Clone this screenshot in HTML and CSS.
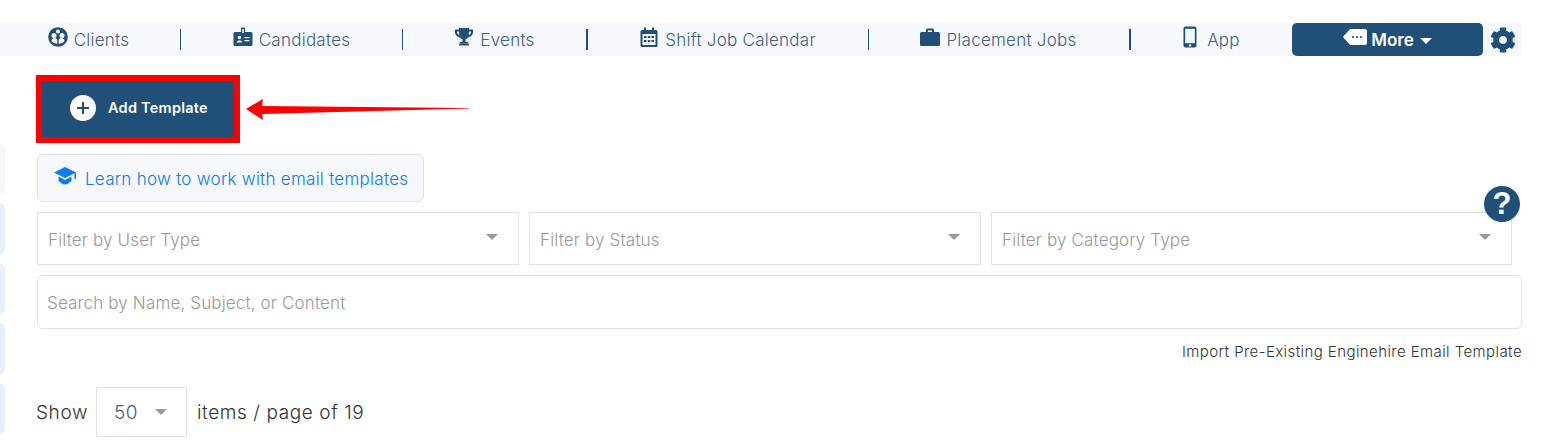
FILE: index.html
```html
<!DOCTYPE html>
<html lang="en">
<head>
  <meta charset="UTF-8">
  <meta name="viewport" content="width=device-width, initial-scale=1.0">
  <title>Email Templates</title>
  <link rel="stylesheet" href="styles.css">
</head>
<body>
  <nav class="nav">
    <a class="nav-item w-clients">
      <svg class="nav-icon" viewBox="0 0 20 20"><circle cx="10" cy="10" r="9.8" fill="#204f78"/><circle cx="10" cy="4.600" r="2" fill="#f6f8fb"/><circle cx="6" cy="8.500" r="2.500" fill="#f6f8fb"/><circle cx="14" cy="8.500" r="2.500" fill="#f6f8fb"/><path d="M3.500 14c0-4 5.500-4 5.800-.8V16.800C6.500 16.800 4.500 15.500 3.500 14zM10.700 13.200c.3-3.200 5.800-3.200 5.800.8-1 1.500-3 2.800-5.800 2.800z" fill="#f6f8fb"/></svg>
      Clients
    </a>
    <span class="nav-sep"></span>
    <a class="nav-item w-candidates">
      <svg class="nav-icon" viewBox="0 0 20 20"><path d="M2 5h6V1.500a1 1 0 0 1 1-1h2a1 1 0 0 1 1 1V5h6a1.500 1.500 0 0 1 1.500 1.500v11A1.500 1.500 0 0 1 18 19H2a1.500 1.500 0 0 1-1.500-1.500v-11A1.500 1.500 0 0 1 2 5z" fill="#204f78"/><rect x="9.200" y="2" width="1.600" height="4" fill="#f6f8fb"/><circle cx="6.500" cy="10.500" r="1.700" fill="#f6f8fb"/><path d="M3.800 15.500c.5-2.600 4.900-2.600 5.400 0zM11.500 10h5v1.200h-5zM11.500 13h5v1.200h-5z" fill="#f6f8fb"/></svg>
      Candidates
    </a>
    <span class="nav-sep"></span>
    <a class="nav-item w-events">
      <svg class="nav-icon" viewBox="0 0 20 20"><path d="M5 1h10v1.500h4v2.500c0 3-2.500 5-5 5.500-.7 1-1.500 1.500-2.500 1.800V15h2.500v1.500H6V15h2.500v-2.700c-1-.3-1.800-.8-2.500-1.800-2.500-.5-5-2.500-5-5.500V2.500h4zM3 4.500V5c0 1.300 1 2.500 2.400 3.100C5.200 7 5 5.800 5 4.500zm14 0h-2c0 1.300-.2 2.500-.4 3.600C16 7.500 17 6.300 17 5z" fill="#204f78"/><rect x="5" y="16.500" width="10" height="2" rx=".5" fill="#204f78"/></svg>
      Events
    </a>
    <span class="nav-sep thick"></span>
    <a class="nav-item w-shift">
      <svg class="nav-icon" viewBox="0 0 20 20"><path d="M5 .5h2V3h6V.5h2V3h2a1.500 1.500 0 0 1 1.500 1.500v14A1.500 1.500 0 0 1 17 20H3a1.500 1.500 0 0 1-1.500-1.500v-14A1.500 1.500 0 0 1 3 3h2z" fill="#204f78"/><rect x="3.500" y="7" width="13" height="11" fill="#f6f8fb"/><path d="M5 9h2.500v2H5zM8.800 9h2.500v2H8.800zM12.500 9H15v2h-2.500zM5 13h2.500v2H5zM8.800 13h2.500v2H8.800zM12.500 13H15v2h-2.500z" fill="#204f78"/></svg>
      Shift Job Calendar
    </a>
    <span class="nav-sep"></span>
    <a class="nav-item w-placement">
      <svg class="nav-icon wide" viewBox="0 0 20 18"><path d="M6 4V2a1.500 1.500 0 0 1 1.500-1.500h5A1.500 1.500 0 0 1 14 2v2h4.500A1.500 1.500 0 0 1 20 5.500v11a1.500 1.500 0 0 1-1.500 1.500h-17A1.500 1.500 0 0 1 0 16.500v-11A1.500 1.500 0 0 1 1.500 4zm2-1.500V4h4V2.500z" fill="#204f78"/></svg>
      Placement Jobs
    </a>
    <span class="nav-sep thick"></span>
    <a class="nav-item w-app">
      <svg class="nav-icon phone" viewBox="0 0 14 22"><rect x=".5" y=".5" width="13" height="21" rx="2" fill="#204f78"/><rect x="2.200" y="2.800" width="9.600" height="14.400" fill="#f6f8fb"/><circle cx="7" cy="19.400" r="1.200" fill="#f6f8fb"/></svg>
      App
    </a>
    <a class="nav-more">
      <svg class="more-icon" viewBox="0 0 24 16"><path d="M7 0h15a2 2 0 0 1 2 2v12a2 2 0 0 1-2 2H7L0 8z" fill="#fff"/><circle cx="10" cy="8" r="1.100" fill="#204f78"/><circle cx="14" cy="8" r="1.100" fill="#204f78"/><circle cx="18" cy="8" r="1.100" fill="#204f78"/></svg>
      More
      <span class="more-caret"></span>
    </a>
    <svg class="gear" viewBox="0 0 512 512"><path fill="#204f78" d="M487.4 315.700l-42.600-24.600c4.300-23.200 4.300-47 0-70.200l42.600-24.600c4.900-2.800 7.100-8.600 5.500-14-11.100-35.600-30-67.800-54.700-94.600-3.800-4.100-10-5.100-14.800-2.300L380.800 110c-17.900-15.400-38.500-27.300-60.800-35.100V25.800c0-5.600-3.900-10.500-9.400-11.700-36.700-8.200-74.300-7.800-109.200 0-5.500 1.200-9.400 6.100-9.400 11.700V75c-22.200 7.900-42.800 19.800-60.800 35.100L88.700 85.500c-4.900-2.800-11-1.900-14.800 2.300-24.700 26.700-43.600 58.900-54.700 94.600-1.700 5.400.6 11.200 5.500 14L67.300 221c-4.300 23.200-4.300 47 0 70.200l-42.600 24.600c-4.900 2.800-7.100 8.600-5.500 14 11.100 35.600 30 67.800 54.700 94.600 3.800 4.100 10 5.100 14.800 2.300l42.600-24.600c17.900 15.400 38.500 27.300 60.800 35.100v49.200c0 5.600 3.900 10.500 9.400 11.700 36.700 8.200 74.300 7.800 109.200 0 5.500-1.200 9.400-6.100 9.400-11.700v-49.200c22.200-7.900 42.800-19.800 60.800-35.100l42.600 24.600c4.900 2.800 11 1.900 14.800-2.300 24.700-26.700 43.600-58.900 54.700-94.600 1.500-5.500-.7-11.300-5.600-14.100zM256 336c-44.100 0-80-35.900-80-80s35.900-80 80-80 80 35.900 80 80-35.900 80-80 80z"/></svg>
  </nav>

  <div class="page">
    <aside class="side">
      <span class="side-tab first"></span>
      <span class="side-tab"></span>
      <span class="side-tab"></span>
      <span class="side-tab"></span>
      <span class="side-tab"></span>
    </aside>

    <main class="content">
      <div class="add-row">
        <button class="add-btn">
          <span class="add-plus"></span>
          Add Template
        </button>
      </div>

      <a class="learn">
        <svg class="learn-icon" viewBox="0 0 24 20"><path d="M12 1 1 6.500 12 12l9.500-4.800V13h1.500V6.500z" fill="#0d7bf2"/><path d="M5.500 10.500v4.300C7.500 17 10 18.500 12 18.500s4.500-1.500 6.500-3.700v-4.300L12 14z" fill="#0d7bf2"/></svg>
        Learn how to work with email templates
      </a>

      <div class="filters">
        <div class="select f-user">Filter by User Type<span class="caret"></span></div>
        <div class="select f-status">Filter by Status<span class="caret"></span></div>
        <div class="select f-category">Filter by Category Type<span class="caret"></span></div>
      </div>

      <div class="search">Search by Name, Subject, or Content</div>

      <div class="import">Import Pre-Existing Enginehire Email Template</div>

      <div class="pager">
        Show
        <div class="page-size">50<span class="caret"></span></div>
        items / page of 19
      </div>
    </main>
  </div>

  <!-- annotation drawn over the screenshot -->
  <svg class="arrow" viewBox="0 0 224 24"><path d="M0 12 17 2l-1 7 207 2v.6L16 17l1 6z" fill="#f00"/></svg>
  <div class="help">?</div>
</body>
</html>
```

FILE: styles.css
```css
body {
  margin: 0;
  padding-top: 23px;
  font-family: "Inter", sans-serif;
  font-weight: 300;
  background-color: #fff;
  color: #444;
  overflow: hidden;
}

.nav {
  display: flex;
  align-items: center;
  width: 1522px;
  height: 33px;
  background-color: #f6f8fb;
  border-radius: 0 4px 4px 0;
}
.nav-item {
  display: flex;
  align-items: center;
  justify-content: center;
  gap: 6px;
  height: 33px;
  font-size: 17px;
  letter-spacing: 0.25px;
  color: #3f6285;
}
.w-clients { width: 180px; padding-right: 3px; box-sizing: border-box; }
.w-candidates { width: 221px; }
.w-events { width: 183px; }
.w-shift { width: 280px; padding-right: 1px; box-sizing: border-box; }
.w-placement { width: 260px; padding-right: 1px; box-sizing: border-box; }
.w-app { width: 161px; }

.nav-icon {
  width: 20px;
  height: 20px;
  margin-top: -5px;
}
.nav-icon.wide { width: 20px; height: 18px; }
.nav-icon.phone { width: 14px; height: 22px; margin-right: 4px; }

.nav-sep {
  width: 1px;
  height: 21px;
  background-color: #204f78;
}
.nav-sep.thick { width: 2px; }

.nav-more {
  display: flex;
  align-items: center;
  justify-content: center;
  gap: 4px;
  width: 191px;
  height: 33px;
  background-color: #204f78;
  border-radius: 5px;
  color: #fff;
  font-size: 17px;
  font-weight: 600;
}
.more-icon {
  width: 24px;
  height: 16px;
  margin-top: -6px;
}
.more-caret {
  width: 0;
  height: 0;
  margin-left: 2px;
  margin-top: 3px;
  border-left: 6px solid transparent;
  border-right: 6px solid transparent;
  border-top: 6px solid #fff;
}
.gear {
  width: 26px;
  height: 26px;
  margin-left: 7px;
}

.page {
  display: flex;
}
.side {
  display: flex;
  flex-direction: column;
  gap: 10px;
  width: 5px;
  padding-top: 88px;
}
.side-tab {
  display: block;
  height: 50px;
  background-color: #e8effa;
  border-radius: 0 5px 5px 0;
}
.side-tab.first {
  background-color: #f6f7f9;
}

.content {
  width: 1485px;
  margin-left: 32px;
}

.add-row {
  padding-top: 19px;
  margin-left: -1px;
}
.add-btn {
  display: flex;
  align-items: center;
  gap: 12px;
  width: 204px;
  height: 68px;
  padding: 0 0 4px 28px;
  background-color: #204f78;
  border: 6px solid #f00;
  color: #fff;
  font-family: inherit;
  font-size: 14.5px;
  font-weight: 600;
  letter-spacing: 0.25px;
}
.add-plus {
  position: relative;
  width: 26px;
  height: 26px;
  margin-top: 2px;
  background-color: #fff;
  border-radius: 50%;
}
.add-plus:before,
.add-plus:after {
  content: "";
  position: absolute;
  background-color: #204f78;
}
.add-plus:before {
  left: 7px;
  top: 12px;
  width: 12px;
  height: 2px;
}
.add-plus:after {
  left: 12px;
  top: 7px;
  width: 2px;
  height: 12px;
}

.learn {
  display: flex;
  align-items: center;
  gap: 8px;
  box-sizing: border-box;
  width: 387px;
  height: 48px;
  margin-top: 11px;
  padding: 2px 0 0 15px;
  background-color: #f6f8fb;
  border: 1px solid #dde2e8;
  border-radius: 6px;
  color: #0d7bf2;
  font-size: 17px;
  letter-spacing: 0.27px;
}
.learn-icon {
  width: 24px;
  height: 20px;
  margin-top: -6px;
}

.filters {
  display: flex;
  gap: 10px;
  margin-top: 10px;
}
.select {
  display: flex;
  align-items: center;
  justify-content: space-between;
  box-sizing: border-box;
  height: 53px;
  padding: 2px 20px 0 10px;
  border: 1px solid #e3e3e3;
  color: #999;
  font-size: 17px;
  letter-spacing: 0.15px;
}
.f-user { width: 482px; }
.f-status { width: 452px; }
.f-category { width: 521px; }

.caret {
  width: 0;
  height: 0;
  margin-top: -6px;
  border-left: 6px solid transparent;
  border-right: 6px solid transparent;
  border-top: 6px solid #999;
}

.search {
  display: flex;
  align-items: center;
  box-sizing: border-box;
  height: 54px;
  margin-top: 10px;
  padding: 2px 0 0 9px;
  border: 1px solid #e3e3e3;
  border-radius: 5px;
  color: #999;
  font-size: 17px;
  letter-spacing: 0.15px;
}

.import {
  margin-top: 13px;
  text-align: right;
  font-size: 15px;
  letter-spacing: 0.42px;
  color: #333;
}

.pager {
  display: flex;
  align-items: center;
  gap: 9px;
  margin-top: 26px;
  margin-left: -1px;
  font-size: 19px;
  letter-spacing: 0.6px;
  color: #333;
}
.page-size {
  display: flex;
  align-items: center;
  justify-content: space-between;
  box-sizing: border-box;
  width: 91px;
  height: 50px;
  margin: 0 1px 0 -1px;
  padding: 0 19px 0 17px;
  border: 1px solid #e3e3e3;
  color: #3f6285;
}
.page-size .caret {
  margin-top: 0;
}

.arrow {
  position: absolute;
  left: 246px;
  top: 97px;
  width: 224px;
  height: 24px;
}
.help {
  position: absolute;
  left: 1484px;
  top: 186px;
  width: 36px;
  height: 36px;
  background-color: #204f78;
  border-radius: 50%;
  color: #fff;
  font-family: "Liberation Sans", sans-serif;
  font-size: 31px;
  font-weight: 700;
  line-height: 36px;
  text-align: center;
}
```
